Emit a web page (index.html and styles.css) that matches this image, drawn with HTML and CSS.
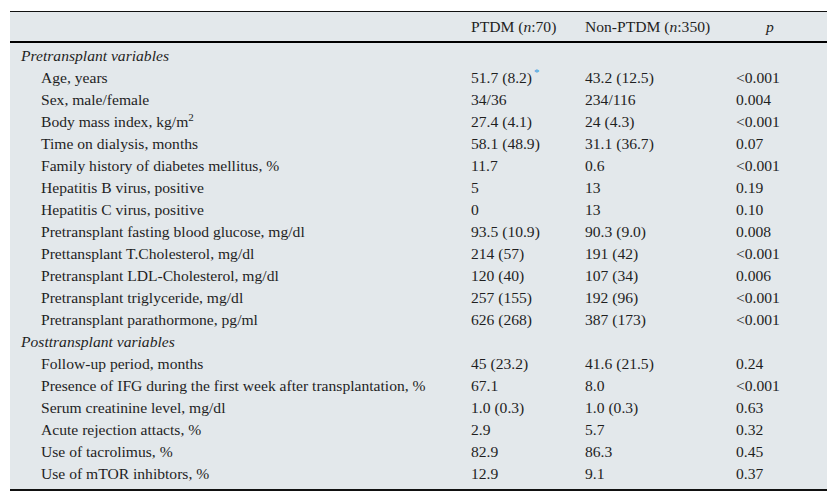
FILE: index.html
```html
<!DOCTYPE html>
<html>
<head>
<meta charset="utf-8">
<link rel="stylesheet" href="styles.css">
</head>
<body>
<table class="data">
  <thead>
    <tr>
      <th class="c-label"></th>
      <th class="c-a">PTDM (<i>n</i>:70)</th>
      <th class="c-b">Non-PTDM (<i>n</i>:350)</th>
      <th class="c-p"><i>p</i></th>
    </tr>
  </thead>
  <tbody>
    <tr class="first"><td class="section" colspan="4">Pretransplant variables</td></tr>
    <tr><td class="item">Age, years</td><td>51.7 (8.2)<sup class="note">*</sup></td><td>43.2 (12.5)</td><td>&lt;0.001</td></tr>
    <tr><td class="item">Sex, male/female</td><td>34/36</td><td>234/116</td><td>0.004</td></tr>
    <tr><td class="item">Body mass index, kg/m<sup class="exp">2</sup></td><td>27.4 (4.1)</td><td>24 (4.3)</td><td>&lt;0.001</td></tr>
    <tr><td class="item">Time on dialysis, months</td><td>58.1 (48.9)</td><td>31.1 (36.7)</td><td>0.07</td></tr>
    <tr><td class="item">Family history of diabetes mellitus, %</td><td>11.7</td><td>0.6</td><td>&lt;0.001</td></tr>
    <tr><td class="item">Hepatitis B virus, positive</td><td>5</td><td>13</td><td>0.19</td></tr>
    <tr><td class="item">Hepatitis C virus, positive</td><td>0</td><td>13</td><td>0.10</td></tr>
    <tr><td class="item">Pretransplant fasting blood glucose, mg/dl</td><td>93.5 (10.9)</td><td>90.3 (9.0)</td><td>0.008</td></tr>
    <tr><td class="item">Prettansplant T.Cholesterol, mg/dl</td><td>214 (57)</td><td>191 (42)</td><td>&lt;0.001</td></tr>
    <tr><td class="item">Pretransplant LDL-Cholesterol, mg/dl</td><td>120 (40)</td><td>107 (34)</td><td>0.006</td></tr>
    <tr><td class="item">Pretransplant triglyceride, mg/dl</td><td>257 (155)</td><td>192 (96)</td><td>&lt;0.001</td></tr>
    <tr><td class="item">Pretransplant parathormone, pg/ml</td><td>626 (268)</td><td>387 (173)</td><td>&lt;0.001</td></tr>
    <tr><td class="section" colspan="4">Posttransplant variables</td></tr>
    <tr><td class="item">Follow-up period, months</td><td>45 (23.2)</td><td>41.6 (21.5)</td><td>0.24</td></tr>
    <tr><td class="item">Presence of IFG during the first week after transplantation, %</td><td>67.1</td><td>8.0</td><td>&lt;0.001</td></tr>
    <tr><td class="item">Serum creatinine level, mg/dl</td><td>1.0 (0.3)</td><td>1.0 (0.3)</td><td>0.63</td></tr>
    <tr><td class="item">Acute rejection attacts, %</td><td>2.9</td><td>5.7</td><td>0.32</td></tr>
    <tr><td class="item">Use of tacrolimus, %</td><td>82.9</td><td>86.3</td><td>0.45</td></tr>
    <tr class="last"><td class="item">Use of mTOR inhibtors, %</td><td>12.9</td><td>9.1</td><td>0.37</td></tr>
  </tbody>
</table>
</body>
</html>
```
FILE: styles.css
```css
html, body {
  margin: 0;
  padding: 0;
  background: #ffffff;
}
body {
  padding: 11px 0 0 10px;
  font-family: "Liberation Serif", "Times New Roman", serif;
  font-size: 15.6px;
  color: #1f1f1f;
}
.data {
  width: 806px;
  border-collapse: collapse;
  background: #e3e8eb;
  border-top: 1px solid #111;
  border-bottom: 2px solid #111;
  table-layout: fixed;
}
.data thead th {
  height: 29px;
  font-weight: normal;
  text-align: left;
  padding: 0;
  border-bottom: 2px solid #000;
  vertical-align: middle;
}
.c-label { width: 461px; }
.c-a { width: 114px; }
.c-b { width: 151px; }
.c-p { width: 80px; }
.data th.c-p { text-align: left; padding-left: 30px; }
.data td {
  height: 22px;
  line-height: 18px;
  padding: 0;
  vertical-align: middle;
  white-space: nowrap;
}
.data td.section {
  font-style: italic;
  padding-left: 11px;
}
.data td.item {
  padding-left: 31px;
}
.data tr.first td { padding-top: 2px; }
.data tr.last td { padding-bottom: 4px; }
sup.note {
  color: #2f9be0;
  font-size: 11px;
  vertical-align: 7px;
  line-height: 0;
  margin-left: 2px;
}
sup.exp {
  font-size: 11px;
  vertical-align: 6px;
  line-height: 0;
}
```
